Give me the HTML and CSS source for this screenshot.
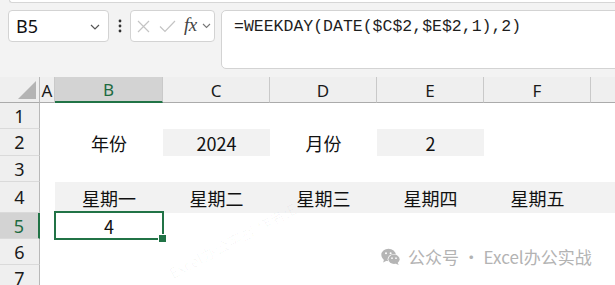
FILE: index.html
```html
<!DOCTYPE html>
<html lang="zh">
<head>
<meta charset="utf-8">
<title>Excel</title>
<link rel="stylesheet" href="styles.css">
</head>
<body>
<div class="app">
  <div class="top">
    <div class="ribbon-edge"></div>
    <div class="toolbar">
      <div class="namebox">
        <span class="namebox-text">B5</span>
        <svg class="chev" width="10" height="6" viewBox="0 0 10 6"><path d="M1 1 L5 5 L9 1" fill="none" stroke="#555" stroke-width="1.2"/></svg>
      </div>
      <div class="dots">
        <svg width="4" height="14" viewBox="0 0 4 14"><circle cx="2" cy="2" r="1.4" fill="#333"/><circle cx="2" cy="7" r="1.4" fill="#333"/><circle cx="2" cy="12" r="1.4" fill="#333"/></svg>
      </div>
      <div class="fxbox">
        <svg class="ico-x" width="13" height="13" viewBox="0 0 13 13"><path d="M1 1 L12 12 M12 1 L1 12" stroke="#c4c4c4" stroke-width="1.2" fill="none"/></svg>
        <svg class="ico-check" width="17" height="13" viewBox="0 0 17 13"><path d="M1 6.5 L6 11.5 L16 1" stroke="#c4c4c4" stroke-width="1.2" fill="none"/></svg>
        <span class="fx">fx</span>
        <svg class="chev-small" width="9" height="6" viewBox="0 0 9 6"><path d="M1 1 L4.5 4.5 L8 1" fill="none" stroke="#777" stroke-width="1.1"/></svg>
      </div>
      <div class="formula">=WEEKDAY(DATE($C$2,$E$2,1),2)</div>
    </div>
  </div>

  <div class="sheet">
    <!-- header row -->
    <div class="hdr corner"><span class="tri"></span></div>
    <div class="hdr col">A</div>
    <div class="hdr col col-sel">B</div>
    <div class="hdr col">C</div>
    <div class="hdr col">D</div>
    <div class="hdr col">E</div>
    <div class="hdr col">F</div>
    <div class="hdr col col-last"></div>

    <!-- row 1 -->
    <div class="hdr row">1</div>
    <div class="cell"></div><div class="cell"></div><div class="cell"></div><div class="cell"></div><div class="cell"></div><div class="cell"></div><div class="cell"></div>

    <!-- row 2 -->
    <div class="hdr row">2</div>
    <div class="cell"></div>
    <div class="cell">年份</div>
    <div class="cell fill">2024</div>
    <div class="cell">月份</div>
    <div class="cell fill">2</div>
    <div class="cell"></div>
    <div class="cell"></div>

    <!-- row 3 -->
    <div class="hdr row">3</div>
    <div class="cell"></div><div class="cell"></div><div class="cell"></div><div class="cell"></div><div class="cell"></div><div class="cell"></div><div class="cell"></div>

    <!-- row 4 -->
    <div class="hdr row">4</div>
    <div class="cell"></div>
    <div class="cell fill">星期一</div>
    <div class="cell fill">星期二</div>
    <div class="cell fill">星期三</div>
    <div class="cell fill">星期四</div>
    <div class="cell fill">星期五</div>
    <div class="cell fill"></div>

    <!-- row 5 -->
    <div class="hdr row row-sel">5</div>
    <div class="cell"></div>
    <div class="cell active">4</div>
    <div class="cell"></div><div class="cell"></div><div class="cell"></div><div class="cell"></div><div class="cell"></div>

    <!-- row 6 -->
    <div class="hdr row">6</div>
    <div class="cell"></div><div class="cell"></div><div class="cell"></div><div class="cell"></div><div class="cell"></div><div class="cell"></div><div class="cell"></div>

    <!-- row 7 -->
    <div class="hdr row">7</div>
    <div class="cell"></div><div class="cell"></div><div class="cell"></div><div class="cell"></div><div class="cell"></div><div class="cell"></div><div class="cell"></div>
  </div>

  <div class="faint">Excel办公实战 作者:E精精</div>

  <div class="watermark">
    <svg class="wechat" width="20" height="18" viewBox="0 0 20 18">
      <ellipse cx="7.5" cy="7" rx="7.2" ry="6.2" fill="#b5b5b5"/>
      <path d="M3 11.5 L2.2 14.5 L6 12.5 Z" fill="#b5b5b5"/>
      <ellipse cx="13" cy="11.3" rx="6.4" ry="5.4" fill="#ffffff"/>
      <ellipse cx="13" cy="11.3" rx="5.6" ry="4.7" fill="#b5b5b5"/>
      <path d="M16.5 14.5 L17.8 17 L14.2 15.6 Z" fill="#b5b5b5"/>
      <circle cx="5" cy="5.2" r="1" fill="#fff"/>
      <circle cx="9.6" cy="5.2" r="1" fill="#fff"/>
      <circle cx="11" cy="10.2" r="0.85" fill="#fff"/>
      <circle cx="15" cy="10.2" r="0.85" fill="#fff"/>
    </svg>
    <span class="wm-text">公众号 · Excel办公实战</span>
  </div>
</div>
</body>
</html>
```

FILE: styles.css
```css
* {
  box-sizing: border-box;
}

html, body {
  margin: 0;
  padding: 0;
  width: 615px;
  height: 285px;
  overflow: hidden;
  background: #ffffff;
}

.app {
  position: relative;
  width: 615px;
  height: 285px;
  overflow: hidden;
  font-family: "Noto Sans", "Noto Sans CJK SC", sans-serif;
  background: #ffffff;
}

.top {
  height: 77px;
  background: #f3f3f3;
}

.ribbon-edge {
  height: 3px;
  margin-left: 9px;
  background: #ffffff;
  border-bottom: 1px solid #d6d6d6;
  border-left: 1px solid #d6d6d6;
  border-bottom-left-radius: 3px;
}

.toolbar {
  display: flex;
  align-items: flex-start;
  padding-top: 7px;
  padding-left: 8px;
}

.namebox {
  width: 101px;
  height: 32px;
  background: #ffffff;
  border: 1px solid #d3d3d3;
  border-radius: 4px;
  display: flex;
  align-items: center;
  justify-content: space-between;
  padding: 0 8px 0 7px;
}

.namebox-text {
  font-family: "Noto Sans", sans-serif;
  font-size: 18px;
  color: #111;
  line-height: 1;
  margin-top: -1px;
}

.chev {
  margin-top: 1px;
}

.dots {
  width: 21px;
  height: 32px;
  display: flex;
  align-items: center;
  justify-content: center;
}

.fxbox {
  width: 85px;
  height: 32px;
  background: #ffffff;
  border: 1px solid #d3d3d3;
  border-radius: 4px;
  display: flex;
  align-items: center;
  padding-left: 6px;
}

.ico-x {
  margin-right: 9px;
}

.ico-check {
  margin-right: 8px;
}

.fx {
  font-family: "Liberation Serif", "DejaVu Serif", serif;
  font-style: italic;
  font-size: 19px;
  color: #444;
  line-height: 1;
  margin-top: -3px;
  margin-right: 5px;
  letter-spacing: -0.5px;
}

.formula {
  flex: 1;
  margin-left: 6px;
  margin-right: -10px;
  height: 59px;
  background: #ffffff;
  border: 1px solid #d3d3d3;
  border-radius: 5px;
  padding: 6px 0 0 12px;
  font-family: "Liberation Mono", "DejaVu Sans Mono", monospace;
  font-size: 16.5px;
  line-height: 20px;
  color: #1e1e1e;
  white-space: nowrap;
}

.sheet {
  display: grid;
  grid-template-columns: 40px 15px 108px 107px 107px 107px 107px 1fr;
  grid-template-rows: 26px 26px 27px 26px 31px 26px 26px 26px;
  font-family: "Noto Sans CJK SC", "Noto Sans", sans-serif;
}

.hdr {
  background: #efefef;
  display: flex;
  align-items: center;
  justify-content: center;
  color: #1a1a1a;
  font-family: "Noto Sans", "Noto Sans CJK SC", sans-serif;
  font-size: 17px;
  line-height: 1;
}

.corner {
  position: relative;
  border-right: 1px solid #b8b8b8;
  border-bottom: 1px solid #ababab;
}

.tri {
  position: absolute;
  right: 3px;
  bottom: 3px;
  width: 0;
  height: 0;
  border-left: 18px solid transparent;
  border-bottom: 18px solid #b4b4b4;
}

.col {
  border-right: 1px solid #c9c9c9;
  border-bottom: 1px solid #ababab;
  padding-top: 1px;
}

.col-last {
  border-right: none;
}

.col-sel {
  background: #d3d3d3;
  color: #1e6b41;
  border-bottom: 2px solid #217346;
}

.row {
  border-right: 1px solid #b8b8b8;
  border-bottom: 1px solid #dadada;
  font-size: 18px;
}

.row-sel {
  background: #d3d3d3;
  color: #1e6b41;
  border-right: 2px solid #217346;
}

.cell {
  display: flex;
  align-items: center;
  justify-content: center;
  font-size: 18px;
  color: #111;
  line-height: 1;
  white-space: nowrap;
}

.fill {
  background: #f2f2f2;
}

.active {
  position: relative;
}

.active::before {
  content: "";
  position: absolute;
  top: -2px;
  left: -1px;
  right: -1px;
  bottom: -1px;
  border: 2px solid #217346;
}

.active::after {
  content: "";
  position: absolute;
  right: -4px;
  bottom: -4px;
  width: 7px;
  height: 7px;
  background: #217346;
  border: 1px solid #ffffff;
}

.faint {
  position: absolute;
  left: 175px;
  top: 262px;
  font-size: 15px;
  color: rgba(0, 0, 0, 0.03);
  white-space: nowrap;
  transform: rotate(-28deg);
  transform-origin: left bottom;
  font-family: "Noto Sans CJK SC", sans-serif;
}

.watermark {
  position: absolute;
  left: 381px;
  top: 247px;
  display: flex;
  align-items: center;
  gap: 7px;
}

.wm-text {
  font-family: "Noto Sans CJK SC", "Noto Sans", sans-serif;
  font-size: 17px;
  color: #b3b3b3;
  line-height: 20px;
  white-space: nowrap;
}
```
